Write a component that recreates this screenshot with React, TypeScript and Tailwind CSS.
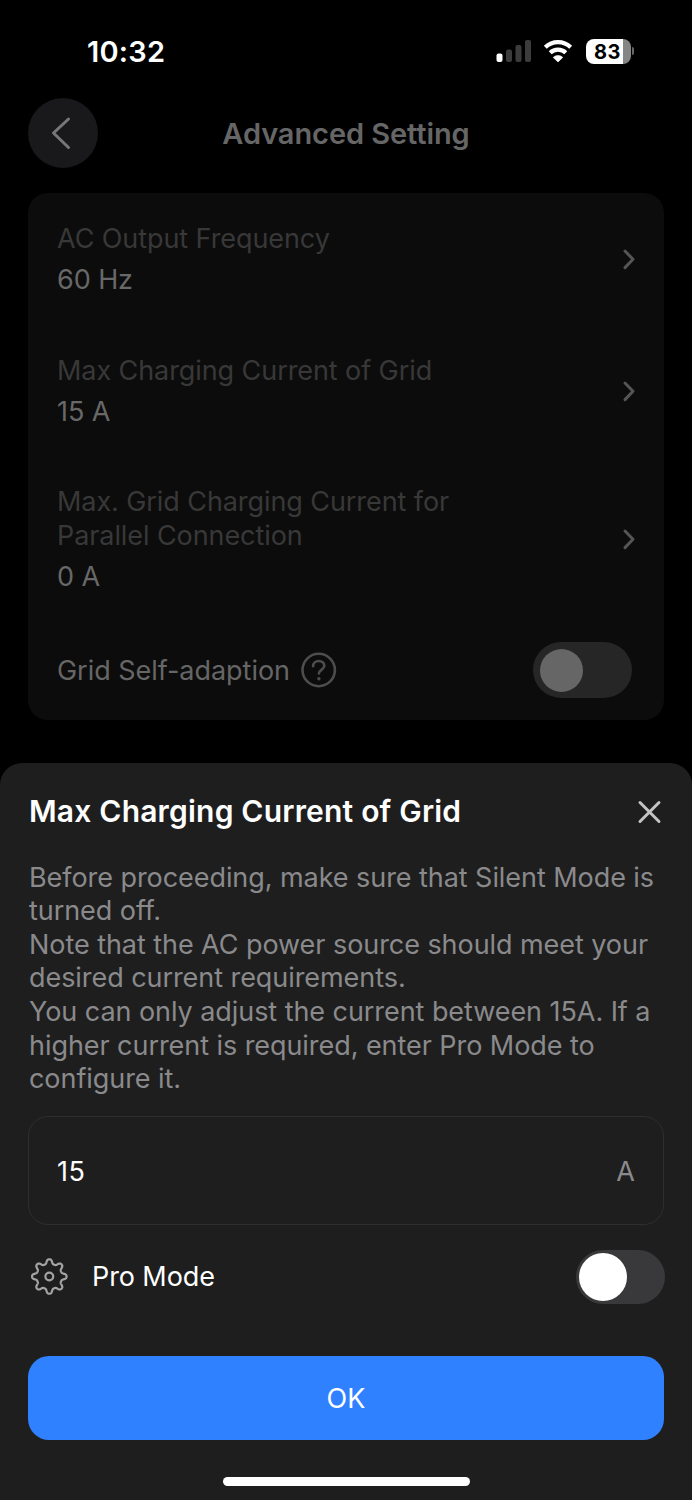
import clsx from 'clsx'

interface Setting {
  label: string[]
  value: string
}

const settings: Setting[] = [
  { label: ['AC Output Frequency'], value: '60 Hz' },
  { label: ['Max Charging Current of Grid'], value: '15 A' },
  {
    label: ['Max. Grid Charging Current for', 'Parallel Connection'],
    value: '0 A'
  }
]

const notes = [
  'Before proceeding, make sure that Silent Mode is',
  'turned off.',
  'Note that the AC power source should meet your',
  'desired current requirements.',
  'You can only adjust the current between 15A. If a',
  'higher current is required, enter Pro Mode to',
  'configure it.'
]

// Closed outline of an eight-tooth gear with soft teeth
function gearPath(cx: number, cy: number) {
  const points: string[] = []
  for (let i = 0; i < 320; i++) {
    const angle = (i / 320) * Math.PI * 2
    // tanh flattens the wave so the flanks stand up straighter
    const r = 15.1 + 2.5 * Math.tanh(1.5 * (Math.cos(8 * angle) - 0.15))
    const x = cx + r * Math.sin(angle)
    const y = cy - r * Math.cos(angle)
    points.push(`${x.toFixed(2)} ${y.toFixed(2)}`)
  }
  return `M${points.join('L')}Z`
}

function GearIcon() {
  return (
    <svg
      className="ml-px"
      width="40"
      height="40"
      viewBox="0 0 40 40"
      fill="none"
      stroke="#a3a3a3"
      strokeWidth="2.2"
      strokeLinejoin="round"
    >
      <path d={gearPath(20.3, 19.5)} />
      <circle cx="20.3" cy="19.5" r="3.9" />
    </svg>
  )
}

function ChevronRight() {
  return (
    <svg
      className="mr-[-1px]"
      width="16"
      height="24"
      viewBox="0 0 16 24"
      fill="none"
      stroke="#555555"
      strokeWidth="3"
      strokeLinecap="round"
      strokeLinejoin="round"
    >
      <path d="M5 4 13 12.3 5 20.6" />
    </svg>
  )
}

function StatusBar() {
  return (
    <div className="flex h-[98px] items-start justify-between pt-[38px] pr-[58px] pl-[87px]">
      <span className="text-[29px] leading-[28px] font-semibold tracking-[0.2px]">
        10:32
      </span>
      <div className="flex h-[26px] items-center">
        <svg width="36" height="26" viewBox="0 0 36 26">
          <rect x="0.5" y="15.5" width="6" height="8.5" rx="2" fill="#fff" />
          <rect x="10" y="11.5" width="6" height="12.5" rx="2" fill="#3c3c3c" />
          <rect x="19.5" y="7" width="6" height="17" rx="2" fill="#3c3c3c" />
          <rect x="29" y="2" width="6" height="22" rx="2" fill="#3c3c3c" />
        </svg>
        <svg
          className="ml-[11px]"
          width="30"
          height="26"
          viewBox="0 0 30 26"
          fill="none"
          stroke="#fff"
          strokeWidth="4.2"
        >
          <path d="M2.3 9.3a18.3 18.3 0 0 1 25.4 0" />
          <path d="M7.2 14.7a11.2 11.2 0 0 1 15.6 0" />
          <path
            d="M15 24 10.2 19.4a6.8 6.8 0 0 1 9.6 0Z"
            fill="#fff"
            stroke="#fff"
            strokeWidth="0.6"
            strokeLinejoin="round"
          />
        </svg>
        <div className="ml-[13px] flex h-[25px] w-[45px] items-center overflow-hidden rounded-[8px] bg-[linear-gradient(90deg,#fff_37px,#858585_37px)]">
          <span className="pt-px pl-[8px] text-[20px] leading-[24px] font-bold tracking-[0.6px] text-black">
            83
          </span>
        </div>
        <span className="ml-[1px] h-[8px] w-[2px] rounded-r-full bg-[#666]" />
      </div>
    </div>
  )
}

function NavBar() {
  return (
    <div className="grid grid-cols-[70px_1fr_70px] items-center px-7">
      <button className="flex h-[70px] w-[70px] items-center justify-center rounded-full bg-[#19191b]">
        <svg
          width="24"
          height="36"
          viewBox="0 0 24 36"
          fill="none"
          stroke="#777777"
          strokeWidth="3"
          strokeLinecap="round"
          strokeLinejoin="round"
        >
          <path d="M17.5 4 2.5 18 17.5 32.5" />
        </svg>
      </button>
      <h1 className="pt-px text-center text-[29px] font-semibold tracking-[-0.08px] text-[#666]">
        Advanced Setting
      </h1>
    </div>
  )
}

function SettingsCard() {
  return (
    <div className="mx-7 mt-[25px] h-[527px] rounded-[20px] bg-[#0c0c0c] px-[29px] pt-[29px]">
      <div className="flex flex-col gap-[57px]">
        {settings.map((setting) => (
          <div
            key={setting.value}
            className="flex items-center justify-between"
          >
            <div className="text-[27px] leading-[33.6px] tracking-[-0.08px]">
              <div className="text-[#383838]">
                {setting.label.map((line) => (
                  <div key={line}>
                    <span>{line}</span>
                  </div>
                ))}
              </div>
              <div className="mt-[7.4px] text-[#686868]">{setting.value}</div>
            </div>
            <ChevronRight />
          </div>
        ))}
      </div>
      <div className="mt-[49px] flex items-center">
        <span className="text-[27px] leading-[33.6px] tracking-[-0.03px] text-[#666]">
          Grid Self-adaption
        </span>
        <svg
          className="ml-[10px]"
          width="38"
          height="38"
          viewBox="0 0 38 38"
          fill="none"
          stroke="#4d4d4d"
          strokeWidth="2.6"
          strokeLinecap="round"
        >
          <circle cx="18.7" cy="19" r="16.2" />
          <path d="M13.1 15.2c0-3.2 2.4-5.2 5.6-5.2s5.6 2 5.6 4.8c0 4-5.4 4-5.4 7.6" />
          <circle cx="18.9" cy="27.8" r="1.7" fill="#4d4d4d" stroke="none" />
        </svg>
        <Toggle dimmed />
      </div>
    </div>
  )
}

function Toggle({ dimmed }: { dimmed?: boolean }) {
  return (
    <button
      role="switch"
      aria-checked="false"
      className={clsx(
        'ml-auto flex items-center rounded-full',
        dimmed
          ? 'mr-[3px] h-[56px] w-[99px] bg-[#262626] pl-[7px]'
          : 'mr-[-1px] h-[54px] w-[89px] bg-[#39393b] pl-[3px]'
      )}
    >
      <span
        className={clsx(
          'rounded-full',
          dimmed ? 'h-[43px] w-[43px] bg-[#666]' : 'h-[48px] w-[48px] bg-white'
        )}
      />
    </button>
  )
}

function CurrentSheet() {
  return (
    <div className="mt-[43px] flex h-[737px] flex-col rounded-t-[22px] bg-[#1e1e1e] px-7 pt-[31px]">
      <div className="flex h-[34px] items-center justify-between">
        <h2 className="pt-px pl-px text-[30px] font-semibold tracking-[0.2px]">
          Max Charging Current of Grid
        </h2>
        <svg
          className="mr-[2px]"
          width="25"
          height="25"
          viewBox="0 0 25 25"
          stroke="#c4c4c4"
          strokeWidth="3"
          strokeLinecap="round"
        >
          <path d="m3 3.5 19 19M22 3.5l-19 19" />
        </svg>
      </div>
      <div className="mt-[32.6px] pl-px text-[27px] leading-[33.6px] tracking-[-0.06px] whitespace-nowrap text-[#8a8a8c]">
        {notes.map((line) => (
          <div key={line}>
            <span>{line}</span>
          </div>
        ))}
      </div>
      <div className="mt-[20.2px] flex h-[109px] items-center justify-between rounded-[20px] border border-[#2e2e2e] px-7 pt-[3px] text-[27px]">
        <span className="tracking-[0.5px]">15</span>
        <span className="text-[#8a8a8c]">A</span>
      </div>
      <div className="mt-[25px] flex items-center">
        <GearIcon />
        <span className="ml-[23px] pt-px text-[27px] tracking-[-0.1px]">
          Pro Mode
        </span>
        <Toggle />
      </div>
      <button className="mt-[52px] h-[84px] rounded-[21px] bg-[#2f81ff] pt-[2px] text-[27px]">
        OK
      </button>
      <div className="mx-auto mt-[37px] h-[9px] w-[247px] rounded-full bg-white" />
    </div>
  )
}

function App() {
  return (
    <div className="h-[1500px] w-[692px] overflow-hidden bg-black font-['Inter',sans-serif] text-white">
      <StatusBar />
      <NavBar />
      <SettingsCard />
      <CurrentSheet />
    </div>
  )
}

export default App
